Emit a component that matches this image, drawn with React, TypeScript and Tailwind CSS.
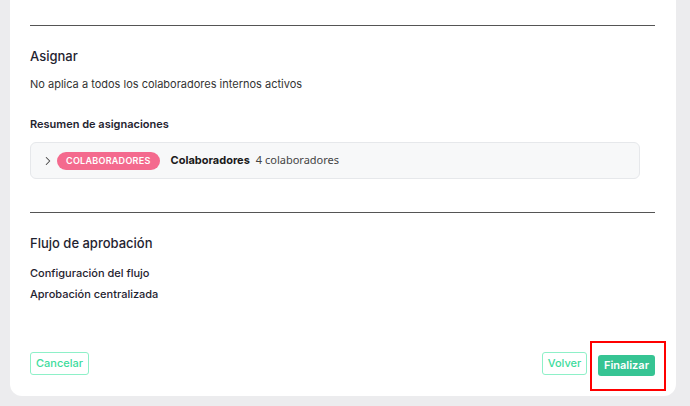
import { ChevronRight } from 'lucide-react';

const font = { fontFamily: 'Inter, "Noto Sans", sans-serif' };

export default function App() {
  return (
    <div className="h-[406px] overflow-hidden bg-[#ececee] px-[10px] pr-[14px]" style={font}>
      <div className="flex flex-col rounded-b-[12px] bg-white px-5 pr-[21px] pt-[25px] pb-5">
        <hr className="border-t border-[#555]" />

        <h2 className="mt-[22px] text-[13px] font-medium leading-4 text-[#1f2330]">Asignar</h2>
        <p className="mt-[13px] text-[11px] leading-[14px] text-[#333]">
          No aplica a todos los colaboradores internos activos
        </p>

        <h3 className="mt-[26px] text-[11px] font-semibold leading-[14px] text-[#1f2330]">
          Resumen de asignaciones
        </h3>
        <div className="mt-[11px] mr-[15px] flex h-[37px] items-center rounded-[6px] border border-[#e6e8eb] bg-[#f7f8f9] pl-[10px]">
          <ChevronRight className="h-[14px] w-[14px] text-[#444]" strokeWidth={1.8} />
          <span className="ml-[2px] flex h-[18px] items-center rounded-full bg-[#f46a8e] px-[9px] text-[9px] font-semibold tracking-[0.03em] text-white">
            COLABORADORES
          </span>
          <span className="ml-[11px] text-[11px] font-bold text-[#1a1a1a]">Colaboradores</span>
          <span className="ml-[6px] text-[11px] text-[#444]" style={{ fontFamily: '"Noto Sans", sans-serif' }}>
            4 colaboradores
          </span>
        </div>

        <hr className="mt-[33px] border-t border-[#555]" />

        <h2 className="mt-[22px] text-[13px] font-medium leading-4 text-[#1f2330]">Flujo de aprobación</h2>
        <p className="mt-[15px] text-[11px] font-medium leading-[14px] text-[#1f2330]">Configuración del flujo</p>
        <p className="mt-[7px] text-[11px] font-medium leading-[14px] text-[#1f2330]">Aprobación centralizada</p>

        <div className="mt-[50px] flex items-center justify-between">
          <button className="h-[23px] w-[59px] rounded-[3px] border border-[#8ef0c8] text-[11px] font-medium text-[#3ddc9c]">
            Cancelar
          </button>
          <div className="flex items-center gap-[11px]">
            <button className="h-[23px] w-[45px] rounded-[3px] border border-[#8ef0c8] text-[11px] font-medium text-[#3ddc9c]">
              Volver
            </button>
            <div className="relative">
              <button className="h-[21px] w-[57px] rounded-[3px] bg-[#36c493] text-[11px] font-semibold text-white">
                Finalizar
              </button>
              <span className="pointer-events-none absolute -top-[10px] -right-[11px] -bottom-[15px] -left-[8px] border-2 border-[#f00]" />
            </div>
          </div>
        </div>
      </div>
    </div>
  );
}
